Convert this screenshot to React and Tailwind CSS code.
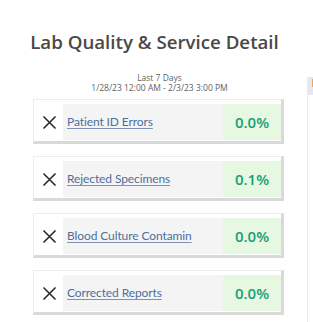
import React from "react";

const rows = [
  { label: "Patient ID Errors", value: "0.0%" },
  { label: "Rejected Specimens", value: "0.1%" },
  { label: "Blood Culture Contamin", value: "0.0%" },
  { label: "Corrected Reports", value: "0.0%" },
];

function CloseMark() {
  return (
    <svg width="15" height="15" viewBox="0 0 15 15" className="block">
      <path d="M1.5 1.5 L13.5 13.5 M13.5 1.5 L1.5 13.5" stroke="#2b2b2b" strokeWidth="1.6" fill="none" />
    </svg>
  );
}

function MetricCard({ label, value }) {
  return (
    <div className="flex w-[251px] h-[45px] border-t border-l border-t-[#ececec] border-l-[#ececec] border-r-[3px] border-b-[3px] border-r-[#d9d9d9] border-b-[#d9d9d9] pt-[4px] pb-[1px] bg-white">
      <div className="w-[29px] flex items-center justify-center pl-[2px]">
        <CloseMark />
      </div>
      <div className="w-[160px] h-[36px] bg-[#f4f4f4] flex items-center pl-[4px]">
        <span className="text-[12px] text-[#4e6f9e] underline underline-offset-2 decoration-[#7d93b6] font-['Lato',sans-serif] tracking-[-0.1px]">
          {label}
        </span>
      </div>
      <div className="w-[58px] h-[36px] bg-[#e6f7e2] flex items-center justify-center">
        <span className="text-[15px] font-semibold text-[#1a9e73] font-['Open_Sans',sans-serif]">{value}</span>
      </div>
    </div>
  );
}

export default function App() {
  return (
    <div className="w-[313px] h-[322px] bg-white flex overflow-hidden">
      <div className="w-[307px] shrink-0">
        <h1 className="pt-[29px] pl-[2px] text-center text-[18.7px] leading-[25px] font-semibold text-[#4b4845] font-['Open_Sans',sans-serif]">
          Lab Quality &amp; Service Detail
        </h1>
        <div className="mt-[19px] pl-[12px] text-center text-[8.5px] leading-[10px] text-[#5f5f5f] font-['Open_Sans',sans-serif]">
          <div>Last 7 Days</div>
          <div>1/28/23 12:00 AM - 2/3/23 3:00 PM</div>
        </div>
        <div className="ml-[33px] mt-[6px] flex flex-col gap-[12px]">
          {rows.map((r) => (
            <MetricCard key={r.label} {...r} />
          ))}
        </div>
      </div>
      <div className="flex-1 mt-[77px] border-l border-[#ececec]">
        <div className="h-[18px] bg-[#e3e8f1] flex pt-[2px] pl-[4px]">
          <div className="w-[2px] h-[8px] bg-[#e8a75a]" />
        </div>
      </div>
    </div>
  );
}
